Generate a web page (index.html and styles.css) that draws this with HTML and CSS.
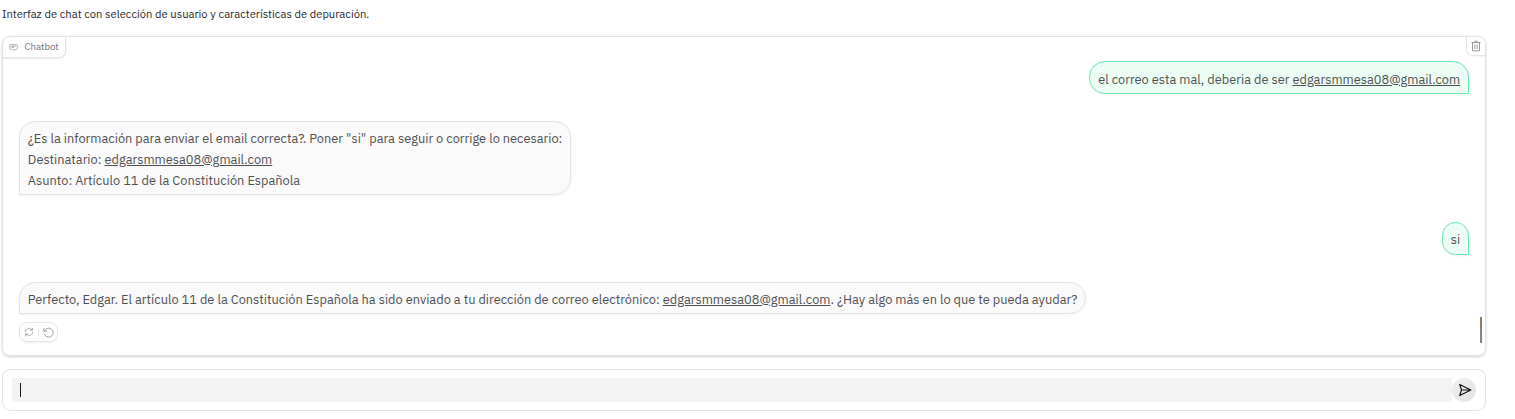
FILE: index.html
```html
<!DOCTYPE html>
<html lang="es">
<head>
<meta charset="utf-8">
<title>Chatbot</title>
<link rel="stylesheet" href="styles.css">
</head>
<body>
<p class="description">Interfaz de chat con selección de usuario y características de depuración.</p>
<main class="chat">
  <div class="label">
    <svg class="label-icon" viewBox="0 0 32 32" fill="currentColor"><path d="M17.740 30L16 29l4-7h6a2 2 0 0 0 2-2V8a2 2 0 0 0-2-2H6a2 2 0 0 0-2 2v12a2 2 0 0 0 2 2h9v2H6a4 4 0 0 1-4-4V8a4 4 0 0 1 4-4h20a4 4 0 0 1 4 4v12a4 4 0 0 1-4 4h-4.840z"/><path d="M8 10h16v2H8zm0 6h10v2H8z"/></svg>
    <span>Chatbot</span>
  </div>
  <button class="clear" aria-label="Borrar">
    <svg viewBox="0 0 32 32" fill="currentColor"><path d="M12 12h2v12h-2zm6 0h2v12h-2z"/><path d="M4 6v2h2v20a2 2 0 0 0 2 2h16a2 2 0 0 0 2-2V8h2V6zm4 22V8h16v20zm4-26h8v2h-8z"/></svg>
  </button>
  <div class="messages">
    <div class="bubble user">el correo esta mal, deberia de ser <a class="mail">edgarsmmesa08@gmail.com</a></div>
    <div class="bubble bot">¿Es la información para enviar el email correcta?. Poner "si" para seguir o corrige lo necesario:<br>Destinatario: <a class="mail">edgarsmmesa08@gmail.com</a><br>Asunto: Artículo 11 de la Constitución Española</div>
    <div class="bubble user short">si</div>
    <div class="bubble bot last">Perfecto, Edgar. El artículo 11 de la Constitución Española ha sido enviado a tu dirección de correo electrónico: <a class="mail">edgarsmmesa08@gmail.com</a>. ¿Hay algo más en lo que te pueda ayudar?</div>
    <div class="actions">
      <svg viewBox="0 0 32 32" fill="currentColor"><path d="M25.950 7.650l.005-.004A13.600 13.600 0 0 0 3 16h2A11.300 11.300 0 0 1 24.600 9H19v2h9V2h-2zM6 24.300l-.005.004A13.600 13.600 0 0 0 29 16h-2A11.300 11.300 0 0 1 7.400 23H13v-2H4v9h2z"/></svg>
      <i class="divider"></i>
      <svg class="undo" viewBox="0 0 24 24" fill="none" stroke="currentColor" stroke-width="1.700" stroke-linecap="round" stroke-linejoin="round"><path d="M2 3v6h6"/><path d="M2.800 9a10 10 0 1 1-.2 6"/></svg>
    </div>
  </div>
  <i class="scroll-thumb"></i>
</main>
<form class="composer">
  <div class="field"><i class="caret"></i></div>
  <button class="send" type="button" aria-label="Enviar"><svg viewBox="0 0 24 24" fill="none" stroke="currentColor" stroke-width="2" stroke-linejoin="round" stroke-linecap="round"><path d="M3 2.500l19 9.500-19 9.500 3-9.500zM6 12h15"/></svg></button>
</form>
</body>
</html>
```
FILE: styles.css
```css
* { box-sizing: border-box; }
body { margin: 0; padding: 6px 29px 0 2px; background: #fff; font-family: "IBM Plex Sans", Roboto, sans-serif; color: #27272a; }
button { padding: 0; border: 0; background: none; }
.description { margin: 0; height: 16px; font-size: 11.2px; line-height: 16px; white-space: nowrap; }
.chat { position: relative; height: 320px; margin-top: 14px; border: 1px solid #e4e4e7; border-radius: 8px; box-shadow: 0 1px 3px rgba(0,0,0,.12), 0 1px 2px rgba(0,0,0,.08); }
.label { position: absolute; left: 0; top: 0; display: flex; align-items: center; gap: 6.500px; width: 63px; height: 21px; padding-left: 6px; border: solid #e4e4e7; border-width: 0 1px 1px 0; border-radius: 7px 0 7px 0; box-shadow: 0 1px 2px rgba(0,0,0,.1); color: #71717a; font-size: 9.6px; line-height: 18px; }
.label-icon { width: 9px; height: 9px; opacity: .9; }
.clear { position: absolute; right: 0; top: 0; display: flex; align-items: center; justify-content: center; width: 19px; height: 19px; border: solid #e4e4e7; border-width: 0 0 1px 1px; border-radius: 0 7px 0 7px; color: #71717a; box-shadow: 0 1px 2px rgba(0,0,0,.05); }
.clear svg { width: 12px; height: 12px; }
.messages { display: flex; flex-direction: column; align-items: flex-start; padding: 24px 16px 0; }
.bubble { margin-bottom: 27px; padding: 6px 7.800px 4px; border: 1px solid #e4e4e7; border-radius: 16px; background: #fafafa; color: #505052; font-size: 12.81px; line-height: 21px; white-space: nowrap; box-shadow: 0 1px 3px rgba(0,0,0,.06); }
.bot { padding-bottom: 3px; border-bottom-left-radius: 0; }
.user { align-self: flex-end; height: 33px; padding-top: 7px; border-color: #6ee7b7; border-bottom-right-radius: 0; background: #ecfdf5; }
.short { padding-top: 6px; }
.last { height: 32px; margin-bottom: 8px; }
.mail { text-decoration: underline; }
.actions { display: flex; align-items: center; width: 39px; height: 20px; padding-left: 4px; border: 1px solid #e4e4e7; border-radius: 8px; color: #85858c; box-shadow: 0 1px 2px rgba(0,0,0,.06); }
.actions svg { width: 10px; height: 10px; }
.actions .undo { width: 11px; height: 11px; }
.divider { width: 1px; height: 9px; margin: 0 4px; background: #e4e4e7; }
.scroll-thumb { position: absolute; right: 3px; top: 280px; width: 2px; height: 26px; background: linear-gradient(#8f8160 0 50%, #858585 50%); }
.composer { display: flex; align-items: center; height: 42px; margin-top: 13px; padding: 0 9px; border: 1px solid #e4e4e7; border-radius: 8px; }
.field { flex: 1; height: 24px; padding: 5px 8px; background: #f3f3f3; }
.caret { display: block; width: 1px; height: 14px; background: #18181b; }
.send { display: flex; align-items: center; justify-content: center; width: 24px; height: 24px; border-radius: 50%; background: linear-gradient(135deg, #f0f0f1, #e2e2e4); color: #111; }
.send svg { width: 14px; height: 14px; margin-left: 1px; }
```
